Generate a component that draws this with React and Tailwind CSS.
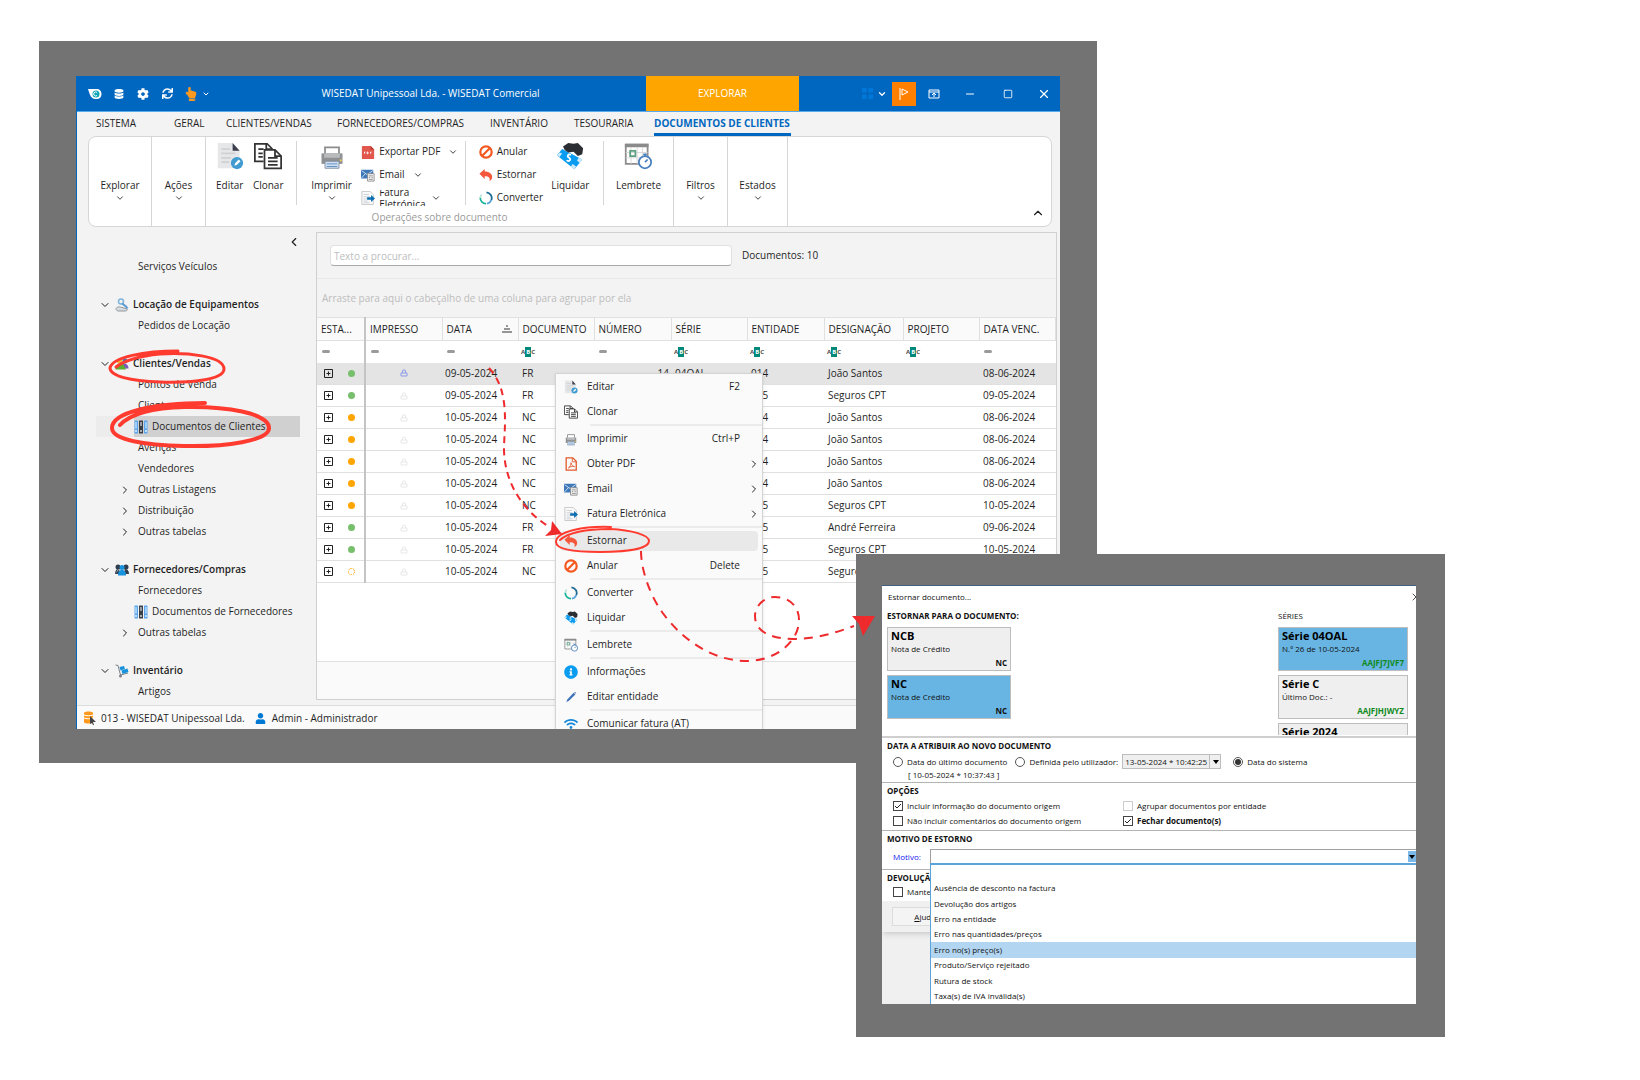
import { useState } from 'react';
import { FaDatabase, FaCog, FaSync, FaHandPointUp, FaUser, FaWifi, FaInfoCircle } from 'react-icons/fa';
import { ChevronDown, ChevronRight, ChevronLeft, ChevronUp, X, Minus, Square } from 'lucide-react';

const TABS = [
  { label: 'SISTEMA', width: 'w-[78px]' },
  { label: 'GERAL', width: 'w-[52px]' },
  { label: 'CLIENTES/VENDAS', width: 'w-[111px]' },
  { label: 'FORNECEDORES/COMPRAS', width: 'w-[153px]' },
  { label: 'INVENTÁRIO', width: 'w-[84px]' },
  { label: 'TESOURARIA', width: 'w-[80px]' },
  { label: 'DOCUMENTOS DE CLIENTES', width: 'w-[137px]' },
];

const COLUMNS = [
  { label: 'ESTA...', width: 'w-[48px]', filter: 'eq' },
  { label: 'IMPRESSO', width: 'w-[77px]', filter: 'eq' },
  { label: 'DATA', width: 'w-[76px]', filter: 'eq', sorted: true },
  { label: 'DOCUMENTO', width: 'w-[76px]', filter: 'abc' },
  { label: 'NÚMERO', width: 'w-[77px]', filter: 'eq' },
  { label: 'SÉRIE', width: 'w-[76px]', filter: 'abc' },
  { label: 'ENTIDADE', width: 'w-[77px]', filter: 'abc' },
  { label: 'DESIGNAÇÃO', width: 'w-[79px]', filter: 'abc' },
  { label: 'PROJETO', width: 'w-[76px]', filter: 'abc' },
  { label: 'DATA VENC.', width: '', filter: 'eq' },
];

const ROWS = [
  { id: 1, state: 'green', date: '09-05-2024', doc: 'FR', num: '14', serie: '04OAL', ent: '014', name: 'João Santos', due: '08-06-2024' },
  { id: 2, state: 'green', date: '09-05-2024', doc: 'FR', ent: '015', name: 'Seguros CPT', due: '09-05-2024' },
  { id: 3, state: 'orange', date: '10-05-2024', doc: 'NC', ent: '014', name: 'João Santos', due: '08-06-2024' },
  { id: 4, state: 'orange', date: '10-05-2024', doc: 'NC', ent: '014', name: 'João Santos', due: '08-06-2024' },
  { id: 5, state: 'orange', date: '10-05-2024', doc: 'NC', ent: '014', name: 'João Santos', due: '08-06-2024' },
  { id: 6, state: 'orange', date: '10-05-2024', doc: 'NC', ent: '014', name: 'João Santos', due: '08-06-2024' },
  { id: 7, state: 'orange', date: '10-05-2024', doc: 'NC', ent: '015', name: 'Seguros CPT', due: '10-05-2024' },
  { id: 8, state: 'green', date: '10-05-2024', doc: 'FR', ent: '015', name: 'André Ferreira', due: '09-06-2024' },
  { id: 9, state: 'green', date: '10-05-2024', doc: 'FR', ent: '015', name: 'Seguros CPT', due: '10-05-2024' },
  { id: 10, state: 'open', date: '10-05-2024', doc: 'NC', ent: '015', name: 'Seguros CPT', due: '10-05-2024' },
];

const DOT = {
  green: 'bg-[#78bf6b]',
  orange: 'bg-[#ffa500]',
  open: 'border border-dotted border-[#ffa500]',
};

const NAV = [
  { items: [{ label: 'Serviços Veículos' }] },
  { title: 'Locação de Equipamentos', icon: RentIcon, items: [{ label: 'Pedidos de Locação' }] },
  {
    title: 'Clientes/Vendas',
    icon: SalesIcon,
    items: [
      { label: 'Pontos de Venda' },
      { label: 'Clientes' },
      { label: 'Documentos de Clientes', binder: true, active: true },
      { label: 'Avenças' },
      { label: 'Vendedores' },
      { label: 'Outras Listagens', sub: true },
      { label: 'Distribuição', sub: true },
      { label: 'Outras tabelas', sub: true },
    ],
  },
  {
    title: 'Fornecedores/Compras',
    icon: PeopleIcon,
    items: [
      { label: 'Fornecedores' },
      { label: 'Documentos de Fornecedores', binder: true },
      { label: 'Outras tabelas', sub: true },
    ],
  },
  { title: 'Inventário', icon: TrolleyIcon, items: [{ label: 'Artigos' }] },
];

const MENU = [
  [
    { label: 'Editar', icon: EditDocIcon, hint: 'F2' },
    { label: 'Clonar', icon: CloneIcon },
  ],
  [
    { label: 'Imprimir', icon: PrinterIcon, hint: 'Ctrl+P' },
    { label: 'Obter PDF', icon: PdfOutlineIcon, more: true },
    { label: 'Email', icon: MailIcon, more: true },
    { label: 'Fatura Eletrónica', icon: InvoiceIcon, more: true },
  ],
  [
    { label: 'Estornar', icon: UndoIcon, active: true },
    { label: 'Anular', icon: BanIcon, hint: 'Delete' },
  ],
  [
    { label: 'Converter', icon: ConvertIcon },
    { label: 'Liquidar', icon: PayIcon },
  ],
  [{ label: 'Lembrete', icon: ReminderIcon }],
  [
    { label: 'Informações', icon: InfoIcon },
    { label: 'Editar entidade', icon: PenIcon },
  ],
  [{ label: 'Comunicar fatura (AT)', icon: WifiIcon }],
];

const REASONS = [
  '',
  'Ausência de desconto na factura',
  'Devolução dos artigos',
  'Erro na entidade',
  'Erro nas quantidades/preços',
  'Erro no(s) preço(s)',
  'Produto/Serviço rejeitado',
  'Rutura de stock',
  'Taxa(s) de IVA inválida(s)',
];

/* ---------- icons ---------- */

function EditDocIcon({ className }) {
  return (
    <svg viewBox="0 0 32 32" className={className}>
      <path d="M2 1h17l8 9v20H2z" fill="#e6e7e8" />
      <path d="M19 1l8 9h-8z" fill="#3b3f4e" />
      <path d="M6 8h10M6 13h16M6 18h11M6 23h9" stroke="#cfd1d3" strokeWidth="2" />
      <circle cx="24" cy="24" r="7" fill="#3f9bd0" />
      <path d="M21 27l1-3 4-4 2 2-4 4z" fill="#fff" />
    </svg>
  );
}

function CloneIcon({ className }) {
  return (
    <svg viewBox="0 0 32 32" className={className} fill="none" stroke="#333" strokeWidth="2">
      <path d="M11 22H1V2h14l6 6" />
      <path d="M14 2v6h7M5 8h6M5 13h5M5 17h5" />
      <path d="M12 9h12l7 7v14H12z" fill="#fff" />
      <path d="M24 9v7h7M16 18h11M16 22h11M16 26h11" />
    </svg>
  );
}

function PrinterIcon({ className }) {
  return (
    <svg viewBox="0 0 32 32" className={className}>
      <path d="M8 6h16v9H8z" fill="#fff" stroke="#8c8c8c" strokeWidth="2" />
      <path d="M4 13h24v12H4z" fill="#8f9193" />
      <path d="M7 13h18v5H7z" fill="#b9bbbd" />
      <path d="M25 20h2v2h-2z" fill="#f6d14c" />
      <path d="M8 22h16v8H8z" fill="#cfe0f3" stroke="#7e8b99" strokeWidth="1" />
      <path d="M10 25h12M10 28h12" stroke="#5a87bd" strokeWidth="1" />
    </svg>
  );
}

function PdfIcon({ className }) {
  return (
    <svg viewBox="0 0 16 16" className={className}>
      <path d="M2 1h9l4 4v10a1 1 0 01-1 1H2a1 1 0 01-1-1V2a1 1 0 011-1z" fill="#e2574c" />
      <path d="M11 1l4 4h-4z" fill="#b53629" />
      <path d="M4 10V8h1M7 10V8h1v2zM11 10V8h1" stroke="#fff" fill="none" />
    </svg>
  );
}

function PdfOutlineIcon({ className }) {
  return (
    <svg viewBox="0 0 32 32" className={className} fill="none" stroke="#e2592b" strokeWidth="3">
      <path d="M5 2h15l8 8v20H5z" />
      <path d="M19 2v9h9" strokeWidth="2" />
      <path d="M10 25c4-3 6-7 6-12 1 6 4 8 8 9-6-1-10 0-14 3z" strokeWidth="2" />
    </svg>
  );
}

function MailIcon({ className }) {
  return (
    <svg viewBox="0 0 32 32" className={className}>
      <path d="M0 4h28v20H0z" fill="#3f78b8" />
      <path d="M1 6l13 9L27 6M1 23l9-10" stroke="#dbe8f5" strokeWidth="2" fill="none" />
      <path d="M15 13h15v17H15z" fill="#f4f4f4" stroke="#8a8a8a" strokeWidth="2" />
      <path d="M18 18h9M18 22h3M24 22h3M18 26h9" stroke="#8a8a8a" strokeWidth="2" />
    </svg>
  );
}

function InvoiceIcon({ className }) {
  return (
    <svg viewBox="0 0 32 32" className={className}>
      <path d="M2 1h19l7 7v23H2z" fill="#fafafa" stroke="#c2c2c2" strokeWidth="2" />
      <path d="M6 8h12M6 13h14M6 18h9M6 23h9M6 27h14" stroke="#c6ccd2" strokeWidth="2" />
      <path d="M14 14h9v-5l9 8-9 8v-5h-9z" fill="#0f6fb3" />
    </svg>
  );
}

function UndoIcon({ className }) {
  return (
    <svg viewBox="0 0 32 32" className={className} fill="#f4573b">
      <path d="M1 13L13 2v6c11 0 18 6 17 14-1 4-3 6-6 8 2-7-1-11-11-11v6z" />
    </svg>
  );
}

function BanIcon({ className }) {
  return (
    <svg viewBox="0 0 32 32" className={className} fill="none" stroke="#f4581f" strokeWidth="5">
      <circle cx="16" cy="16" r="13" />
      <path d="M7 25L25 7" />
    </svg>
  );
}

function InfoIcon({ className }) {
  return <FaInfoCircle className={`${className} text-[#0a9cf0]`} />;
}

function PenIcon({ className }) {
  return (
    <svg viewBox="0 0 32 32" className={className}>
      <path d="M5 28l3-7L22 6l4 4-14 14z" fill="#3f73b8" />
      <path d="M23 5l2-1 3 3-1 2z" fill="#6b87a8" />
    </svg>
  );
}

function WifiIcon({ className }) {
  return <FaWifi className={`${className} text-[#1488d8]`} />;
}

function ConvertIcon({ className }) {
  return (
    <svg viewBox="0 0 32 32" className={className} fill="none" strokeWidth="4">
      <path d="M17 3a13 13 0 0111 18" stroke="#1e6a94" />
      <path d="M28 21a13 13 0 01-10 8" stroke="#58a5dd" />
      <path d="M16 29A13 13 0 013 15" stroke="#18b59b" />
      <path d="M3 15a13 13 0 013-7" stroke="#b7e4dc" />
    </svg>
  );
}

function PayIcon({ className }) {
  return (
    <svg viewBox="0 0 32 32" className={className}>
      <path d="M7 8l23 12-9 11L1 15z" fill="#0a9cf0" />
      <path d="M4 12l3 1-3 4-3-2zM26 18l4 2-3 4-3-3zM19 25l4 3-2 3-4-3z" fill="#cdeafb" />
      <path d="M17 15c-3-2-5 1-2 3s0 5-3 3" stroke="#fff" strokeWidth="2" fill="none" />
      <path d="M8 5l6-4 6 1 5-1 6 6-1 7-5 2-5-5-6 1-4-3z" fill="#2b2f33" />
    </svg>
  );
}

function ReminderIcon({ className }) {
  return (
    <svg viewBox="0 0 32 32" className={className} fill="none">
      <path d="M2 3h25v22H2z" fill="#fff" stroke="#8b8b8b" strokeWidth="2" />
      <path d="M1 2h27v4H1z" fill="#8b8b8b" />
      <path d="M2 12h25M2 18h25M8 6v19M15 6v19M21 6v19" stroke="#d5d5d5" />
      <path d="M7 10h6v6H7z" stroke="#5fa083" strokeWidth="2" />
      <circle cx="24" cy="23" r="7" fill="#fff" stroke="#4a80bd" strokeWidth="2" />
      <path d="M22 14h4M24 16v-2M24 23l3-3" stroke="#4a80bd" strokeWidth="2" />
    </svg>
  );
}

function BinderIcon({ className }) {
  return (
    <svg viewBox="0 0 28 28" className={className}>
      <rect x="1" y="1" width="7" height="26" rx="1" fill="#5aa5ee" />
      <rect x="10" y="1" width="8" height="26" rx="1" fill="#3a3f46" />
      <rect x="20" y="1" width="7" height="26" rx="1" fill="#5aa5ee" />
      <path d="M4 4v13M24 4v13" stroke="#b9dbf8" strokeWidth="3" />
      <path d="M14 4v8" stroke="#b8bec6" strokeWidth="3" />
      <circle cx="4" cy="22" r="2" fill="#e6f2fc" />
      <circle cx="14" cy="22" r="2" fill="#cfd6dd" />
      <circle cx="24" cy="22" r="2" fill="#e6f2fc" />
    </svg>
  );
}

function RentIcon({ className }) {
  return (
    <svg viewBox="0 0 28 28" className={className} fill="none">
      <path d="M2 21c4-5 8-3 12-2l8 2c4 1 3 5-2 5H8c-4 0-6-2-6-5z" fill="#d9dde0" stroke="#8f969c" strokeWidth="2" />
      <circle cx="12" cy="7" r="5" stroke="#7fb4dc" strokeWidth="3" />
      <path d="M14 11l8 6 3 4" stroke="#5c9bd0" strokeWidth="4" />
    </svg>
  );
}

function SalesIcon({ className }) {
  return (
    <svg viewBox="0 0 28 28" className={className}>
      <circle cx="9" cy="8" r="5" fill="#f2b632" />
      <circle cx="20" cy="8" r="5" fill="#4f73a8" />
      <path d="M15 14c7-2 12 1 12 9H18z" fill="#7d5bb5" />
      <path d="M1 25c0-9 4-12 9-12s8 3 12 12z" fill="#5cae2f" />
    </svg>
  );
}

function PeopleIcon({ className }) {
  return (
    <svg viewBox="0 0 28 28" className={className}>
      <circle cx="6" cy="8" r="5" fill="#2f3d4d" />
      <circle cx="22" cy="8" r="5" fill="#2f3d4d" />
      <path d="M0 22c0-7 3-10 7-10M0 22h8l1-10zM28 22h-8l-1-10c6 0 9 3 9 10z" fill="#2f3d4d" />
      <circle cx="14" cy="9" r="5" fill="#1792dd" />
      <path d="M6 25c0-8 3-11 8-11s8 3 8 11z" fill="#1792dd" />
    </svg>
  );
}

function TrolleyIcon({ className }) {
  return (
    <svg viewBox="0 0 28 28" className={className} fill="none">
      <path d="M1 2l5 1 5 19 15-4" stroke="#7a8188" strokeWidth="2" />
      <circle cx="11" cy="24" r="3" fill="#7a8188" />
      <path d="M9 6l9-2 2 6-9 3zM13 13l12-4 2 7-12 4z" fill="#1792dd" />
    </svg>
  );
}

function LockIcon({ className }) {
  return (
    <svg viewBox="0 0 8 8" className={className} fill="none" stroke="currentColor">
      <path d="M1 4h6v3H1zM2 4l1-3h2l1 3" />
    </svg>
  );
}

function AppLogo({ className }) {
  return (
    <svg viewBox="0 0 28 24" className={className}>
      <path d="M0 2h17c6 0 10 4 10 10s-4 10-10 10c-8 0-12-4-14-11z" fill="#fff" />
      <circle cx="16" cy="12" r="7" fill="#10a7b8" />
      <path d="M18 9a4 4 0 100 6" stroke="#fff" strokeWidth="2" fill="none" />
    </svg>
  );
}

/* ---------- main window ---------- */

function TitleBar() {
  return (
    <header className="flex h-9 items-stretch border-b border-[#5aa9ea] bg-[#0067c0] text-white">
      <div className="flex items-center pl-[6px]">
        <button className="flex w-6 justify-center" aria-label="WISEDAT"><AppLogo className="h-3 w-3.5" /></button>
        <button className="flex w-6 justify-center" aria-label="Base de dados"><FaDatabase className="size-2.5" /></button>
        <button className="flex w-6 justify-center" aria-label="Definições"><FaCog className="size-3" /></button>
        <button className="flex w-6 justify-center" aria-label="Atualizar"><FaSync className="size-[11px]" /></button>
        <button className="flex w-9 items-center justify-center gap-1" aria-label="Toque">
          <FaHandPointUp className="size-3.5 text-[#ff9a1f]" />
          <ChevronDown className="size-2" strokeWidth={3} />
        </button>
      </div>
      <div className="flex flex-1 items-center justify-center whitespace-nowrap">WISEDAT Unipessoal Lda. - WISEDAT Comercial</div>
      <button className="w-[153px] bg-[#ffa500]">EXPLORAR</button>
      <div className="flex w-[261px] items-center justify-end">
        <button className="flex items-center gap-1 pr-[5px]" aria-label="Vista">
          <svg viewBox="0 0 12 12" className="size-[11px]" fill="#0078d9">
            <path d="M0 0h5v5H0zM7 0h5v5H7zM0 7h5v5H0zM7 7h5v5H7z" />
          </svg>
          <ChevronDown className="size-2.5" strokeWidth={3} />
        </button>
        <button className="flex size-6 items-center justify-center bg-[#ff8000]" aria-label="Marcar">
          <svg viewBox="0 0 12 14" className="h-3.5 w-3" fill="none" stroke="#fff">
            <path d="M2 1v12M4 2l6 3-6 3z" />
          </svg>
        </button>
        <button className="flex w-[36px] justify-center" aria-label="Friso">
          <svg viewBox="0 0 12 12" className="size-3" fill="none" stroke="#fff">
            <path d="M1 2h10v8H1zM1 4h10M6 9V6M4 7l2-2 2 2" />
          </svg>
        </button>
        <button className="flex w-9 justify-center" aria-label="Minimizar"><Minus className="size-3" /></button>
        <button className="flex w-10 justify-center" aria-label="Maximizar"><Square className="size-2.5" /></button>
        <button className="flex w-8 justify-center" aria-label="Fechar"><X className="size-3.5" strokeWidth={2} /></button>
      </div>
    </header>
  );
}

function BigButton({ icon: Icon, label, width, arrow }) {
  return (
    <button className={`flex flex-col items-center ${width}`}>
      <span className="flex h-[34px] items-center justify-center">{Icon && <Icon className="size-7" />}</span>
      <span className="mt-1 leading-4">{label}</span>
      {arrow && <ChevronDown className="size-2.5" strokeWidth={2} />}
    </button>
  );
}

function SmallButton({ icon: Icon, label, arrow }) {
  return (
    <button className="flex h-[23px] items-center gap-1 whitespace-nowrap text-left">
      <Icon className="size-3.5 shrink-0" />
      <span>{label}</span>
      {arrow && <ChevronDown className="ml-1 size-2.5 shrink-0" strokeWidth={2} />}
    </button>
  );
}

function Ribbon() {
  return (
    <div className="ml-[11px] mr-2 flex h-[91px] rounded-lg border border-[#d6d6d6] bg-white">
      <div className="flex w-[63px] items-start justify-center border-r border-[#d6d6d6] pt-0.5"><BigButton label="Explorar" width="w-14" arrow /></div>
      <div className="flex w-[54px] items-start justify-center border-r border-[#d6d6d6] pt-0.5"><BigButton label="Ações" width="w-12" arrow /></div>
      <div className="flex w-[468px] flex-col border-r border-[#d6d6d6]">
        <div className="mt-0.5 flex h-[70px] items-start pl-[5px]">
          <BigButton icon={EditDocIcon} label="Editar" width="w-[38px]" />
          <BigButton icon={CloneIcon} label="Clonar" width="w-10" />
          <span className="mx-2 mt-0.5 h-16 w-px bg-[#d6d6d6]" />
          <BigButton icon={PrinterIcon} label="Imprimir" width="w-[54px]" arrow />
          <div className="w-[108px] pl-[3px] pt-px">
            <SmallButton icon={PdfIcon} label="Exportar PDF" arrow />
            <SmallButton icon={MailIcon} label="Email" arrow />
            <button className="flex h-[23px] items-center gap-1 text-left">
              <InvoiceIcon className="size-3.5 shrink-0" />
              <span className="flex h-4 w-12 items-center overflow-hidden leading-3">Fatura Eletrónica</span>
              <ChevronDown className="size-2.5 shrink-0" strokeWidth={2} />
            </button>
          </div>
          <span className="mt-0.5 h-16 w-px bg-[#d6d6d6]" />
          <div className="w-[84px] pl-[13px] pt-px">
            <SmallButton icon={BanIcon} label="Anular" />
            <SmallButton icon={UndoIcon} label="Estornar" />
            <SmallButton icon={ConvertIcon} label="Converter" />
          </div>
          <BigButton icon={PayIcon} label="Liquidar" width="w-11" />
          <span className="ml-[11px] mt-0.5 h-16 w-px bg-[#d6d6d6]" />
          <BigButton icon={ReminderIcon} label="Lembrete" width="w-[70px]" />
        </div>
        <p className="text-center leading-4 text-[#9a9a9a]">Operações sobre documento</p>
      </div>
      <div className="flex w-[54px] items-start justify-center border-r border-[#d6d6d6] pt-0.5"><BigButton label="Filtros" width="w-12" arrow /></div>
      <div className="flex w-[60px] items-start justify-center border-r border-[#d6d6d6] pt-0.5"><BigButton label="Estados" width="w-12" arrow /></div>
      <div className="flex flex-1 items-end justify-end p-1.5">
        <button aria-label="Recolher friso"><ChevronUp className="size-3.5" strokeWidth={2} /></button>
      </div>
    </div>
  );
}

function Sidebar() {
  return (
    <nav className="w-[239px] shrink-0">
      <div className="flex h-6 items-start justify-end pr-[15px] pt-[3px]">
        <button aria-label="Recolher"><ChevronLeft className="size-3.5" strokeWidth={2} /></button>
      </div>
      {NAV.map(({ title, icon: Icon, items }, i) => (
        <section key={title || i} className="mb-[17px]">
          {title && (
            <button className="flex h-[21px] items-center pl-[22px] font-semibold">
              <ChevronDown className="size-3" strokeWidth={2} />
              <Icon className="mx-1 size-3.5" />
              {title}
            </button>
          )}
          {items.map((item) => (
            <a key={item.label} href="#" className={`ml-[19px] mr-4 flex h-[21px] items-center ${item.active ? 'bg-[#ececec]' : ''}`}>
              <span className="flex w-[38px] shrink-0 justify-center pl-5">{item.sub && <ChevronRight className="size-3" strokeWidth={2} />}</span>
              <span className={`flex h-full flex-1 items-center gap-1 whitespace-nowrap ${item.active ? 'bg-[#d0d0d0]' : ''} ${item.binder ? '' : 'pl-1'}`}>
                {item.binder && <BinderIcon className="size-3.5 shrink-0" />}
                {item.label}
              </span>
            </a>
          ))}
        </section>
      ))}
    </nav>
  );
}

function FilterMark({ kind }) {
  if (kind === 'eq') return <span className="block h-[3px] w-2 rounded-sm bg-[#9a9a9a]" />;
  return (
    <span className="flex items-center text-[6px] font-bold leading-none text-[#4a4a4a]">
      A<span className="bg-[#00897b] px-px py-0.5 text-white">B</span>C
    </span>
  );
}

function DocumentsTable() {
  return (
    <table className="w-full table-fixed border-collapse bg-white text-left">
      <thead>
        <tr className="h-[23px] border-y border-[#e0e0e0] bg-[#fafafa]">
          {COLUMNS.map((col, i) => (
            <th
              key={col.label}
              className={`${col.width} whitespace-nowrap border-r p-0 pl-1 font-normal ${i === 0 ? 'border-r-2 border-r-[#c4c4c4]' : 'border-r-[#e0e0e0]'}`}
            >
              <span className="flex items-center justify-between pr-1.5">
                {col.label}
                {col.sorted && (
                  <svg viewBox="0 0 10 8" className="h-2 w-2.5" stroke="#333">
                    <path d="M4 1h2M2 4h6M0 7h10" />
                  </svg>
                )}
              </span>
            </th>
          ))}
        </tr>
        <tr className="h-[22px]">
          {COLUMNS.map((col, i) => (
            <td key={col.label} className={`p-0 ${i === 0 ? 'border-r-2 border-r-[#c4c4c4]' : ''} ${col.filter === 'eq' ? 'pl-[5px]' : 'pl-[3px]'}`}>
              <FilterMark kind={col.filter} />
            </td>
          ))}
        </tr>
      </thead>
      <tbody>
        {ROWS.map((row, i) => (
          <tr key={row.id} className={`h-[22px] border-b border-[#e0e0e0] ${i === 0 ? 'bg-[#e4e4e4]' : ''}`}>
            <td className="border-r-2 border-r-[#c4c4c4] p-0">
              <span className="flex items-center justify-between pl-[7px] pr-[9px]">
                <button className="block" aria-label="Expandir">
                  <svg viewBox="0 0 18 18" className="size-[9px]" fill="none" stroke="#222" strokeWidth="2">
                    <path d="M1 1h16v16H1zM5 9h8M9 5v8" />
                  </svg>
                </button>
                <span className={`size-[7px] rounded-full ${DOT[row.state]}`} />
              </span>
            </td>
            <td className="p-0">
              <LockIcon className={`mx-auto size-2 ${i === 0 ? 'text-[#8c9be8]' : 'text-[#e8e8e8]'}`} />
            </td>
            <td className="p-0 pl-[3px]">{row.date}</td>
            <td className="p-0 pl-1">{row.doc}</td>
            <td className="p-0 pr-0.5 text-right">{row.num}</td>
            <td className="p-0 pl-1">{row.serie}</td>
            <td className="p-0 pl-1">{row.ent}</td>
            <td className="whitespace-nowrap p-0 pl-1">{row.name}</td>
            <td />
            <td className="p-0 pl-1">{row.due}</td>
          </tr>
        ))}
      </tbody>
    </table>
  );
}

function ContextMenu() {
  return (
    <div role="menu" className="absolute left-[478px] top-[297px] w-[208px] border border-[#d4d4d4] bg-[#fafafa] pb-4 shadow">
      {MENU.map((group, g) => (
        <div key={group[0].label} className={g > 0 ? 'ml-[34px] border-t-2 border-[#ebebeb]' : ''}>
          {group.map(({ label, icon: Icon, hint, more, active }) => (
            <button
              key={label}
              role="menuitem"
              className={`flex h-[25px] items-center text-left ${g > 0 ? '-ml-[34px] w-[206px]' : 'w-full'}`}
            >
              <span className={`mx-1 flex h-5 flex-1 items-center rounded-sm pl-1 ${active ? 'bg-[#e9e9e9]' : ''}`}>
                <Icon className="mr-[9px] size-3.5 shrink-0" />
                <span className="flex-1">{label}</span>
                {hint && <span className="pr-[18px]">{hint}</span>}
                {more && <ChevronRight className="-mr-0.5 size-3" strokeWidth={2} />}
              </span>
            </button>
          ))}
        </div>
      ))}
    </div>
  );
}

function MainWindow() {
  return (
    <div className="relative overflow-hidden border-l border-[#0067c0] bg-[#f3f3f3]">
      <TitleBar />
      <div role="tablist" className="flex h-6 items-stretch pl-[19px]">
        {TABS.map((tab, i) => (
          <button
            key={tab.label}
            role="tab"
            className={`shrink-0 whitespace-nowrap border-b-[3px] pt-0.5 text-left ${tab.width} ${
              i === TABS.length - 1 ? 'border-[#0067c0] font-bold text-[#0067c0]' : 'border-transparent'
            }`}
          >
            {tab.label}
          </button>
        ))}
      </div>
      <Ribbon />
      <div className="mt-[5px] flex h-[468px] overflow-hidden">
        <Sidebar />
        <main className="mr-[3px] flex flex-1 flex-col border border-[#d0d0d0]">
          <div className="flex h-[46px] items-center border-b border-[#e8e8e8] pl-[13px]">
            <input
              type="text"
              aria-label="Texto a procurar"
              placeholder="Texto a procurar..."
              className="h-[21px] w-[402px] rounded-sm border border-[#e0e0e0] border-b-[#a8a8a8] bg-white px-[3px] placeholder:text-[#bdbdbd]"
            />
            <span className="ml-2.5">Documentos: 10</span>
          </div>
          <p className="flex h-[38px] items-center pl-[5px] text-[#bdbdbd]">Arraste para aqui o cabeçalho de uma coluna para agrupar por ela</p>
          <div className="flex-1 bg-white">
            <DocumentsTable />
          </div>
          <div className="h-[38px] border-t border-[#e0e0e0] bg-[#fafafa]" />
        </main>
      </div>
      <footer className="mt-[5px] flex h-6 items-center border-t border-[#dcdcdc] bg-[#fafafa] pl-[6px] pt-px">
        <svg viewBox="0 0 14 14" className="size-3.5">
          <path d="M1 2c0-2 9-2 9 0v9c0 2-9 2-9 0z" fill="#ff9a1f" />
          <path d="M1 4c2 1 7 1 9 0M1 7c2 1 7 1 9 0" stroke="#fff" fill="none" />
          <path d="M7 5l6 6-3 0 1 3-1 0-1-2-2 1z" fill="#444" />
        </svg>
        <span className="ml-1">013 - WISEDAT Unipessoal Lda.</span>
        <FaUser className="ml-2.5 mr-1.5 size-[11px] text-[#0078d4]" />
        <span>Admin - Administrador</span>
      </footer>
      <ContextMenu />
    </div>
  );
}

/* ---------- reversal dialog ---------- */

function Card({ title, text, code, selected, green }) {
  return (
    <button
      className={`flex h-11 shrink-0 flex-col border border-[#bdbdbd] px-[3px] text-left leading-3 ${selected ? 'bg-[#68b5e3]' : 'bg-[#efefef]'}`}
    >
      <span className="mt-px text-[11px] font-bold leading-[14px] text-black">{title}</span>
      <span>{text}</span>
      <span className={`mt-0.5 self-end font-bold ${green ? 'text-[#0f8a1c]' : ''}`}>{code}</span>
    </button>
  );
}

function Check({ label, checked, disabled, bold }) {
  const [on, setOn] = useState(Boolean(checked));
  return (
    <label className={`flex h-[15px] items-center gap-1 whitespace-nowrap ${bold ? 'font-bold' : ''}`}>
      <span className="grid size-2.5">
        <input
          type="checkbox"
          checked={on}
          disabled={disabled}
          onChange={() => setOn(!on)}
          className={`col-start-1 row-start-1 size-2.5 appearance-none border bg-white ${disabled ? 'border-[#cccccc]' : 'border-[#444]'}`}
        />
        {on && (
          <svg viewBox="0 0 10 10" className="pointer-events-none col-start-1 row-start-1 size-2.5" fill="none" stroke="#222">
            <path d="M2 5l2 2 4-4" />
          </svg>
        )}
      </span>
      {label}
    </label>
  );
}

function Radio({ label, value, current, onPick }) {
  return (
    <label className="flex items-center gap-1 whitespace-nowrap">
      <span className="grid size-2.5 place-items-center">
        <input
          type="radio"
          name="docDate"
          checked={current === value}
          onChange={() => onPick(value)}
          className="col-start-1 row-start-1 size-2.5 appearance-none rounded-full border border-[#555] bg-white"
        />
        {current === value && <span className="pointer-events-none col-start-1 row-start-1 size-1.5 rounded-full bg-[#333]" />}
      </span>
      {label}
    </label>
  );
}

function ReversalDialog() {
  const [dateMode, setDateMode] = useState('system');
  return (
    <div className="relative h-[419px] overflow-hidden bg-[#f0f0f0] text-[8px] leading-3 text-[#111]">
      <div className="bg-white shadow-md">
        <div className="flex h-[22px] items-center justify-between border-t border-[#40607f] pl-1.5">
          <span>Estornar documento...</span>
          <button aria-label="Fechar" className="-mr-1.5"><X className="size-3" strokeWidth={1.5} /></button>
        </div>
        <div className="flex h-[131px] overflow-hidden border-b-2 border-[#cfcfcf]">
          <div className="flex flex-1 flex-col gap-1 pl-[5px] pt-[3px]">
            <h2 className="h-[13px] font-bold">ESTORNAR PARA O DOCUMENTO:</h2>
            <div className="flex w-[124px] flex-col gap-1">
              <Card title="NCB" text="Nota de Crédito" code="NC" />
              <Card title="NC" text="Nota de Crédito" code="NC" selected />
            </div>
          </div>
          <div className="flex flex-col gap-1 pr-2 pt-[3px]">
            <h2 className="h-[13px]">SÉRIES</h2>
            <div className="flex h-[108px] w-[130px] flex-col gap-1 overflow-hidden">
              <Card title="Série 04OAL" text="N.º 26 de 10-05-2024" code="AAJFJ7JVF7" selected green />
              <Card title="Série C" text="Último Doc.: -" code="AAJFJHJWYZ" green />
              <Card title="Série 2024" text="" code="" />
            </div>
          </div>
        </div>
        <section className="border-b border-[#b4b4b4] pb-0.5 pl-[5px] pt-0.5">
          <h2 className="font-bold">DATA A ATRIBUIR AO NOVO DOCUMENTO</h2>
          <div className="mt-0.5 flex h-[15px] items-center pl-1.5">
            <Radio label="Data do último documento" value="last" current={dateMode} onPick={setDateMode} />
            <span className="w-2" />
            <Radio label="Definida pelo utilizador:" value="user" current={dateMode} onPick={setDateMode} />
            <span className="ml-1 mr-3 grid w-[99px] items-center">
              <select
                aria-label="Data definida"
                className="col-start-1 row-start-1 h-[15px] w-full appearance-none border border-[#bdbdbd] bg-[#efefef] pl-0.5"
              >
                <option>13-05-2024 * 10:42:25</option>
              </select>
              <span className="pointer-events-none col-start-1 row-start-1 flex h-[13px] w-3 items-center justify-center justify-self-end border-l border-[#bdbdbd]">
                <svg viewBox="0 0 6 4" className="h-1 w-1.5"><path d="M0 0h6L3 4z" /></svg>
              </span>
            </span>
            <Radio label="Data do sistema" value="system" current={dateMode} onPick={setDateMode} />
          </div>
          <p className="pl-[21px] leading-[11px]">[ 10-05-2024 * 10:37:43 ]</p>
        </section>
        <section className="border-b border-[#b4b4b4] pb-0.5 pl-[5px] pt-0.5">
          <h2 className="mb-px font-bold">OPÇÕES</h2>
          <div className="grid grid-cols-[230px_1fr] pl-1.5">
            <Check label="Incluir informação do documento origem" checked />
            <Check label="Agrupar documentos por entidade" disabled />
            <Check label="Não incluir comentários do documento origem" />
            <Check label="Fechar documento(s)" checked bold />
          </div>
        </section>
        <section className="border-b border-[#b4b4b4] pb-[5px] pl-[5px] pt-0.5">
          <h2 className="font-bold">MOTIVO DE ESTORNO</h2>
          <div className="mt-1 flex h-[15px] items-center">
            <label htmlFor="motivo" className="w-[43px] pl-1.5 text-[#1414f0]">Motivo:</label>
            <span className="grid h-full flex-1 items-center">
              <select id="motivo" className="col-start-1 row-start-1 h-full w-full appearance-none border border-r-0 border-[#a0a0a0] bg-white">
                {REASONS.map((r) => <option key={r}>{r}</option>)}
              </select>
              <span className="pointer-events-none col-start-1 row-start-1 flex h-[11px] w-2 items-center justify-center justify-self-end bg-[#7cb8e8]">
                <svg viewBox="0 0 6 4" className="h-1 w-1.5"><path d="M0 0h6L3 4z" /></svg>
              </span>
            </span>
          </div>
        </section>
        <section className="pb-0.5 pl-[5px] pt-0.5">
          <h2 className="font-bold">DEVOLUÇÃO</h2>
          <div className="pl-1.5"><Check label="Manter" /></div>
        </section>
        <div className="bg-[#f0f0f0] px-2.5 py-1.5">
          <button className="h-[19px] w-[66px] border border-[#dcdcdc] bg-[#f4f4f4]"><u>A</u>juda</button>
        </div>
      </div>
      <ul role="listbox" className="absolute bottom-0 left-12 right-0 top-[278px] grid grid-rows-9 border-l border-t-2 border-[#5aa2da] bg-white">
        {REASONS.map((r) => (
          <li
            key={r}
            role="option"
            aria-selected={r === 'Erro no(s) preço(s)'}
            className={`flex items-center pl-[3px] ${r === 'Erro no(s) preço(s)' ? 'bg-[#b2d6f2]' : ''}`}
          >
            {r}
          </li>
        ))}
      </ul>
    </div>
  );
}

/* hand-drawn rings and dashed arrows laid over both windows */
function Annotations() {
  return (
    <svg viewBox="0 0 1640 1080" className="pointer-events-none absolute left-0 top-0 h-[1080px] w-[1640px]" fill="none" strokeLinecap="round">
      <g stroke="#ff3b30">
        <path strokeWidth="3" d="M116 367C125 360 140 356 160 354C186 352 224 356 224 369C224 380 190 383 160 382C130 381 110 376 110 368C112 357 145 351 178 351" />
        <path strokeWidth="4" d="M120 425C130 414 150 408 185 407C225 406 269 413 269 428C269 441 225 447 184 446C145 445 112 440 112 428C112 412 155 403 205 403" />
        <path strokeWidth="2" d="M560 540C570 531 590 529 610 529C632 530 649 535 649 541C649 549 626 552 600 552C574 552 556 549 556 542C556 531 585 526 611 527" />
      </g>
      <g stroke="#ee2a2c" strokeWidth="2" strokeLinecap="butt">
        <path strokeDasharray="7 5" d="M489 368C500 380 505 395 505 420C505 432 504 440 504 450C505 490 530 515 548 526" />
        <path
          strokeDasharray="9 7"
          d="M641 551C641 570 650 595 662 612C680 637 710 661 747 661C775 661 799 642 799 620C799 607 790 597 775 597C764 597 755 606 755 616C755 632 772 639 793 639C815 639 835 633 854 626"
        />
      </g>
      <path d="M562 534L552 521L551 530L545 536zM875 616L852 616L859 624L863 636z" fill="#ee2a2c" />
    </svg>
  );
}

export default function App() {
  return (
    <div className="relative min-h-screen overflow-hidden bg-white pt-[41px] font-['Open_Sans','Noto_Sans',sans-serif] text-[10px] text-[#1f1f1f]">
      <div className="ml-[39px] mr-[543px] bg-[#737373] px-[37px] pb-[34px] pt-[35px]">
        <MainWindow />
      </div>
      <div className="absolute left-[856px] right-[195px] top-[554px] bg-[#737373] pb-[33px] pl-[26px] pr-[29px] pt-[31px]">
        <ReversalDialog />
      </div>
      <Annotations />
    </div>
  );
}
